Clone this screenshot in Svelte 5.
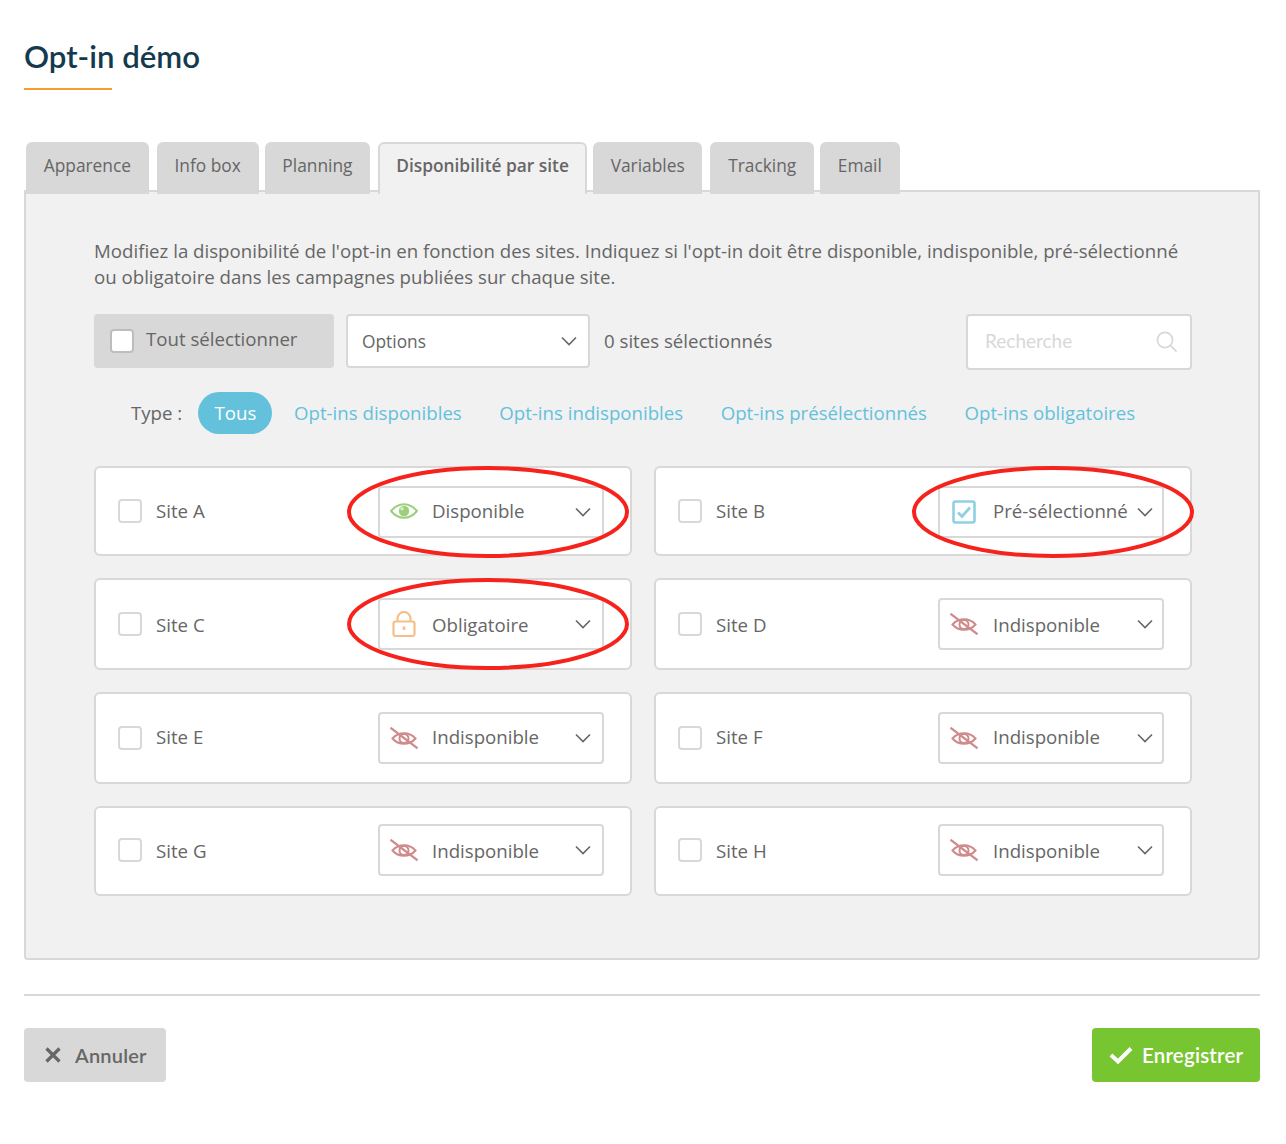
<script lang="ts">
    type Status = "on" | "pre" | "req" | "off";
    type Site = { name: string; status: Status; ring?: "a" | "b" };

    const tabs = ["Apparence", "Info box", "Planning", "Disponibilité par site", "Variables", "Tracking", "Email"];
    const filters = ["Opt-ins disponibles", "Opt-ins indisponibles", "Opt-ins présélectionnés", "Opt-ins obligatoires"];

    const labels: Record<Status, string> = {
        on: "Disponible",
        pre: "Pré-sélectionné",
        req: "Obligatoire",
        off: "Indisponible",
    };

    const sites: Site[] = [
        { name: "Site A", status: "on", ring: "a" },
        { name: "Site B", status: "pre", ring: "b" },
        { name: "Site C", status: "req", ring: "a" },
        { name: "Site D", status: "off" },
        { name: "Site E", status: "off" },
        { name: "Site F", status: "off" },
        { name: "Site G", status: "off" },
        { name: "Site H", status: "off" },
    ];
</script>

{#snippet chevron()}
    <svg class="chevron" width="16" height="10" viewBox="0 0 16 10" fill="none">
        <path d="M1 1.500l7 7 7-7" stroke="#666" stroke-width="1.600" />
    </svg>
{/snippet}

<div class="page">
    <h1 class="title">Opt-in démo</h1>

    <div class="tabs">
        {#each tabs as tab, i}
            <div class="tab" class:active={i === 3}>{tab}</div>
        {/each}
    </div>

    <div class="panel">
        <p class="intro">
            Modifiez la disponibilité de l'opt-in en fonction des sites. Indiquez si l'opt-in doit être disponible, indisponible, pré-sélectionné
            ou obligatoire dans les campagnes publiées sur chaque site.
        </p>

        <div class="toolbar">
            <div class="select-all">
                <span class="check"></span>
                <span>Tout sélectionner</span>
            </div>
            <div class="options">
                <span>Options</span>
                {@render chevron()}
            </div>
            <span class="count">0 sites sélectionnés</span>
            <div class="search">
                <span>Recherche</span>
                <svg width="22" height="22" viewBox="0 0 22 22" fill="none" stroke="#d8d8d8" stroke-width="1.700">
                    <circle cx="9" cy="9" r="7.600" />
                    <path d="M14.600 14.600l6 6" />
                </svg>
            </div>
        </div>

        <div class="types">
            <span class="type-label">Type :</span>
            <span class="pill">Tous</span>
            {#each filters as filter}
                <span class="filter">{filter}</span>
            {/each}
        </div>

        <div class="sites">
            {#each sites as site}
                <div class="site">
                    <span class="check"></span>
                    <span class="site-name">{site.name}</span>
                    <div class="status">
                        <span class="status-icon">
                            {#if site.status === "on"}
                                <svg class="eye" width="28" height="16" viewBox="0 0 28 16" fill="none">
                                    <path d="M1 8c3.500-4.200 8-6.800 13-6.800S23.500 3.800 27 8c-3.500 4.200-8 6.800-13 6.800S4.500 12.200 1 8z" stroke="#9ccf7c" stroke-width="2" />
                                    <circle cx="14" cy="8" r="5.200" fill="#9ccf7c" />
                                    <circle cx="12" cy="5.800" r="1.800" fill="#d5ecc6" />
                                </svg>
                            {:else if site.status === "pre"}
                                <svg width="24" height="24" viewBox="0 0 24 24" fill="none">
                                    <rect x="1.500" y="1.500" width="21" height="21" rx="2" stroke="#8fd0e2" stroke-width="2.600" />
                                    <path d="M6 12.500l4 4 8-9" stroke="#8fd0e2" stroke-width="2.800" />
                                </svg>
                            {:else if site.status === "req"}
                                <svg width="24" height="26" viewBox="0 0 24 26" fill="none" stroke="#f5c088" stroke-width="2.200">
                                    <rect x="1.500" y="10.500" width="21" height="14.500" rx="2" />
                                    <path d="M5.500 10.500V7.500a6.500 6.500 0 0 1 13 0v3" />
                                    <path d="M12 15.500v3.500" stroke-width="2.600" />
                                </svg>
                            {:else}
                                <svg width="28" height="22" viewBox="0 0 28 22" fill="none" stroke="#cf8a8c" stroke-width="2">
                                    <path d="M2.500 11.500c3-3.400 6.900-5.200 11.500-5.200s8.500 1.800 11.500 5.200c-3 3.400-6.900 5.200-11.500 5.200s-8.500-1.800-11.500-5.200z" />
                                    <circle cx="14" cy="11.500" r="4.500" />
                                    <path d="M.5.700l27 20.600" stroke-width="2.200" />
                                </svg>
                            {/if}
                        </span>
                        <span class="status-label">{labels[site.status]}</span>
                        {@render chevron()}
                        {#if site.ring}
                            <svg class="ring ring-{site.ring}" width="282" height="92" viewBox="0 0 282 92" fill="none">
                                <ellipse cx="141" cy="46" rx="139" ry="44" stroke="#f5231c" stroke-width="4" />
                            </svg>
                        {/if}
                    </div>
                </div>
            {/each}
        </div>
    </div>

    <div class="footer">
        <button class="btn cancel">
            <svg width="18" height="18" viewBox="0 0 18 18" fill="none">
                <path d="M2.500 2.500l13 13M15.500 2.500l-13 13" stroke="#666" stroke-width="3.200" />
            </svg>
            Annuler
        </button>
        <button class="btn save">
            <svg width="24" height="18" viewBox="0 0 24 18" fill="none">
                <path d="M2 9l7 6.500L22 2.500" stroke="#fff" stroke-width="4" />
            </svg>
            Enregistrer
        </button>
    </div>
</div>

<style>
    :global(body) {
        background: #fff;
    }

    .page {
        box-sizing: border-box;
        height: 1144px;
        padding: 0 26px 0 24px;
        font-family: "Open Sans", sans-serif;
        font-size: 18.670px;
        color: #666;
    }

    .title {
        margin: 0;
        padding-top: 36px;
        height: 54px;
        font-family: Lato, sans-serif;
        font-size: 31.200px;
        line-height: 40px;
        font-weight: 600;
        color: #153a4d;
    }

    .title::after {
        content: "";
        display: block;
        width: 88px;
        height: 2px;
        margin-top: 12px;
        background: #f59d2f;
    }

    .tabs {
        display: flex;
        gap: 6px;
        margin: 52px 0 0 2px;
        position: relative;
        z-index: 1;
    }

    .tab {
        height: 52px;
        padding: 0 17.750px;
        background: #d8d8d8;
        border-radius: 6px 6px 0 0;
        font-size: 17.330px;
        line-height: 46px;
    }

    .tab:nth-child(odd) {
        margin-right: 2px;
    }

    .tab.active {
        box-sizing: border-box;
        background: #f1f1f1;
        border: 2px solid #d8d8d8;
        border-bottom: 0;
        line-height: 42px;
        padding: 0 16px;
        font-weight: 600;
    }

    .panel {
        box-sizing: border-box;
        height: 770px;
        margin-top: -4px;
        padding: 46px 66px 0 68px;
        background: #f1f1f1;
        border: 2px solid #d8d8d8;
        border-radius: 0 0 4px 4px;
    }

    .intro {
        margin: 0;
        line-height: 26px;
    }

    .toolbar {
        display: flex;
        align-items: flex-start;
        margin-top: 24px;
    }

    .select-all {
        box-sizing: border-box;
        display: flex;
        align-items: center;
        gap: 12px;
        width: 240px;
        height: 54px;
        padding: 0 16px;
        background: #d8d8d8;
        border-radius: 4px;
    }

    .select-all .check {
        background: #fff;
        border-color: #bdbdbd;
    }

    .select-all span:last-child {
        margin-top: -6px;
    }

    .check {
        box-sizing: border-box;
        flex: none;
        width: 24px;
        height: 24px;
        background: #fff;
        border: 2px solid #d8d8d8;
        border-radius: 4px;
    }

    .options {
        box-sizing: border-box;
        display: flex;
        align-items: center;
        justify-content: space-between;
        width: 244px;
        height: 54px;
        margin-left: 12px;
        padding: 0 11px 0 14px;
        background: #fff;
        border: 2px solid #d8d8d8;
        border-radius: 4px;
        font-size: 17.330px;
    }

    .count {
        margin-left: 14px;
        line-height: 54px;
    }

    .search {
        box-sizing: border-box;
        display: flex;
        align-items: center;
        justify-content: space-between;
        width: 226px;
        height: 56px;
        margin-left: auto;
        padding: 0 12px 0 17px;
        background: #fff;
        border: 2px solid #d8d8d8;
        border-radius: 4px;
        font-family: Lato, sans-serif;
        font-size: 19px;
        color: #d8d8d8;
    }

    .search span {
        margin-bottom: 4px;
    }

    .types {
        display: flex;
        align-items: center;
        height: 42px;
        margin-top: 22px;
        padding-left: 37px;
    }

    .type-label {
        width: 67px;
        margin-bottom: 2px;
    }

    .pill {
        box-sizing: border-box;
        width: 74px;
        padding-left: 1px;
        line-height: 42px;
        margin-right: 22px;
        text-align: center;
        background: #64c1dc;
        border-radius: 21px;
        color: #fff;
    }

    .filter {
        margin-right: 37.500px;
        margin-bottom: 2px;
        color: #64c1dc;
    }

    .sites {
        display: grid;
        grid-template-columns: 538px 538px;
        grid-template-rows: 90px 92px 92px 90px;
        gap: 22px;
        margin-top: 32px;
    }

    .site {
        box-sizing: border-box;
        display: flex;
        align-items: center;
        padding: 0 26px 0 22px;
        background: #fff;
        border: 2px solid #d8d8d8;
        border-radius: 6px;
    }

    /* first and last row sit a pixel off centre */
    .site:nth-child(-n + 2) {
        padding-top: 2px;
    }

    .site:nth-child(n + 7) {
        padding-bottom: 2px;
    }

    .site-name {
        margin-left: 14px;
    }

    /* rows 1 and 3: labels land higher */
    .site:nth-child(4n + 1) .site-name,
    .site:nth-child(4n + 2) .site-name,
    .site:nth-child(4n + 1) .status-label,
    .site:nth-child(4n + 2) .status-label {
        margin-bottom: 4px;
    }

    .site:nth-child(-n + 2) .check {
        margin-bottom: 2px;
    }

    .status {
        box-sizing: border-box;
        position: relative;
        display: flex;
        align-items: center;
        width: 226px;
        height: 52px;
        margin-left: auto;
        padding: 0 11px 0 10px;
        border: 2px solid #d8d8d8;
        border-radius: 4px;
    }

    .site:nth-child(even) .status {
        padding-right: 9px;
    }

    .status-icon {
        display: flex;
        justify-content: center;
        width: 28px;
    }

    .eye {
        margin-bottom: 2px;
    }

    .status-label {
        flex: 1;
        margin-left: 14px;
        white-space: nowrap;
    }

    .site:nth-child(even) .status-label {
        margin-left: 15px;
    }

    .chevron {
        flex: none;
    }

    .ring {
        position: absolute;
        top: -22px;
        pointer-events: none;
    }

    .ring-a {
        left: -33px;
    }

    .ring-b {
        left: -28px;
    }

    .footer {
        display: flex;
        justify-content: space-between;
        margin-top: 34px;
        padding-top: 32px;
        border-top: 2px solid #d8d8d8;
    }

    .btn {
        display: flex;
        align-items: center;
        height: 54px;
        border: 0;
        border-radius: 4px;
        font-family: Lato, sans-serif;
        font-size: 20px;
        font-weight: 600;
        letter-spacing: 0.2px;
    }

    .cancel {
        gap: 13px;
        width: 142px;
        padding: 0 0 0 20px;
        background: #d8d8d8;
        color: #666;
    }

    .save {
        gap: 9px;
        width: 168px;
        padding: 0 0 0 17px;
        font-size: 20.500px;
        background: #78c532;
        color: #fff;
    }
</style>
